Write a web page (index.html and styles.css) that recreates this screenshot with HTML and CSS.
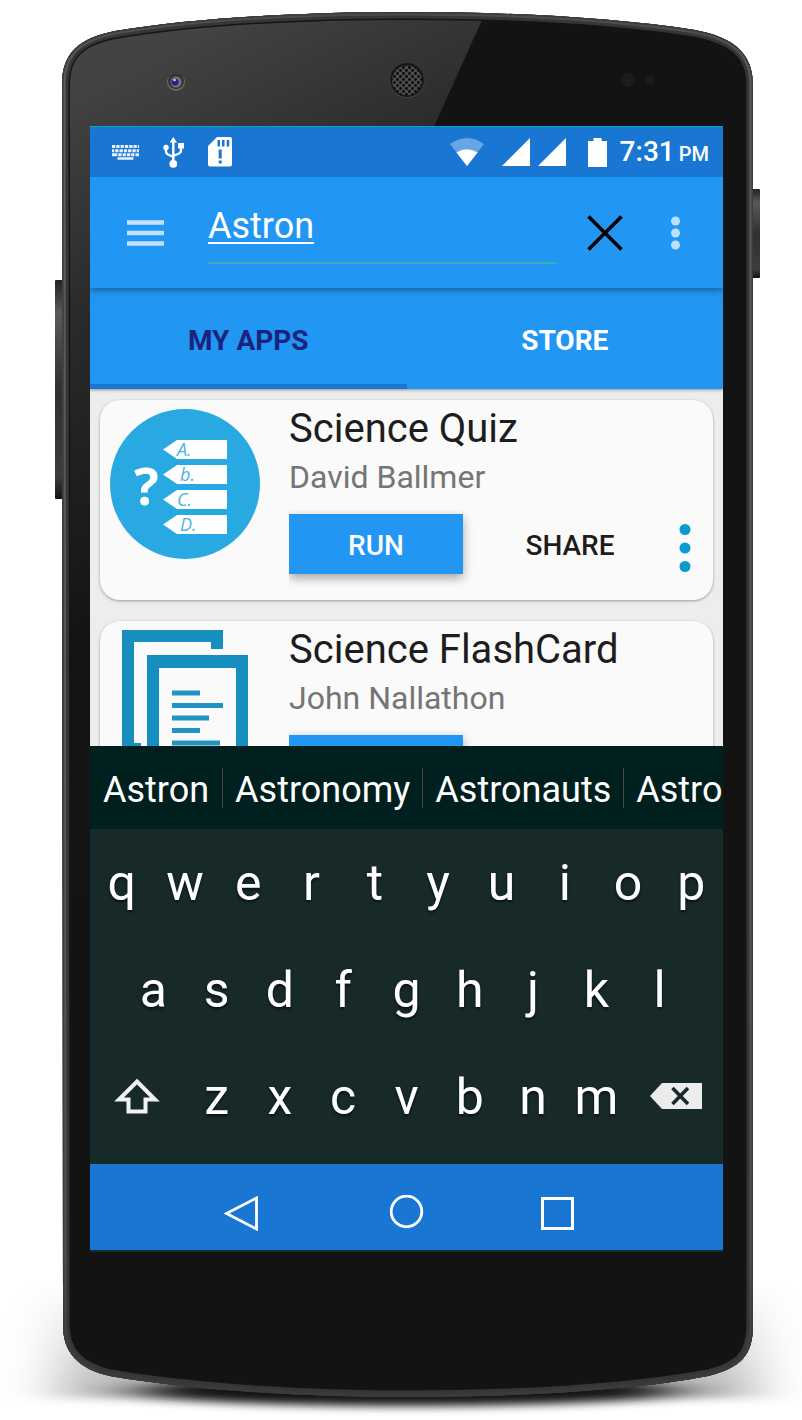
FILE: index.html
```html
<!DOCTYPE html>
<html lang="en">
<head>
<meta charset="utf-8">
<meta name="viewport" content="width=device-width, initial-scale=1">
<title>My Apps</title>
<link rel="stylesheet" href="styles.css">
</head>
<body>
<div class="phone">
  <svg class="phone-body" viewBox="0 0 802 1420" preserveAspectRatio="none" aria-hidden="true">
    <defs>
      <path id="shell" d="M62 85C62 52 80 38 115 31C200 17 310 12 407 12C505 12 610 17 695 30C732 37 753 52 753 85V1325C753 1356 740 1368 708 1376C630 1391 510 1397 407 1397C305 1397 190 1390 110 1376C78 1369 63 1352 63 1325Z"/>
      <clipPath id="shell-clip"><use href="#shell"/></clipPath>
      <linearGradient id="gloss" gradientUnits="userSpaceOnUse" x1="150" y1="50" x2="370" y2="490">
        <stop offset="0" stop-color="#434343"/><stop offset="0.4" stop-color="#2b2b2b"/><stop offset="1" stop-color="#141414"/>
      </linearGradient>
      <linearGradient id="key-side" x1="0" y1="0" x2="0" y2="1">
        <stop offset="0" stop-color="#222"/><stop offset="0.15" stop-color="#5a5a5a"/><stop offset="0.5" stop-color="#303030"/><stop offset="0.9" stop-color="#3c3c3c"/><stop offset="1" stop-color="#111"/>
      </linearGradient>
      <linearGradient id="rim" gradientUnits="userSpaceOnUse" x1="0" y1="0" x2="0" y2="1420">
        <stop offset="0" stop-color="#47484a"/><stop offset="0.06" stop-color="#5b5c5f"/><stop offset="0.88" stop-color="#505153"/><stop offset="0.96" stop-color="#3a3a3a"/>
      </linearGradient>
      <linearGradient id="halo" x1="0" y1="0" x2="0" y2="1">
        <stop offset="0" stop-color="#000" stop-opacity="0"/><stop offset="1" stop-color="#000" stop-opacity="0.3"/>
      </linearGradient>
      <filter id="blur-wide" x="-20%" y="-60%" width="140%" height="220%"><feGaussianBlur stdDeviation="28 5"/></filter>
      <filter id="blur-low" x="-20%" y="-100%" width="140%" height="300%"><feGaussianBlur stdDeviation="30 5"/></filter>
    
      <pattern id="mesh" width="6" height="6" patternUnits="userSpaceOnUse">
        <rect width="6" height="6" fill="#4c4c4c"/><circle cx="1.5" cy="1.5" r="1.4" fill="#080808"/><circle cx="4.5" cy="4.5" r="1.4" fill="#080808"/>
      </pattern>
    </defs>
    <rect x="60" y="1280" width="694" height="118" fill="url(#halo)" filter="url(#blur-wide)"/>
    <ellipse cx="407" cy="1391" rx="270" ry="15" fill="#000" opacity="0.9" filter="url(#blur-low)"/>
    <rect x="55" y="280" width="9" height="219" rx="1" fill="url(#key-side)"/>
    <rect x="751" y="189" width="9" height="89" rx="1" fill="url(#key-side)"/>
    <g clip-path="url(#shell-clip)">
      <use href="#shell" fill="#131313"/>
      <path d="M50 0H491L90 890H50Z" fill="url(#gloss)"/>
      <g fill="none">
        <use href="#shell" stroke="#151515" stroke-width="16"/>
        <use href="#shell" stroke="#353637" stroke-width="13"/>
        <use href="#shell" stroke="url(#rim)" stroke-width="7"/>
        <use href="#shell" stroke="#3b3c3d" stroke-width="3"/>
      </g>
    </g>
    <circle cx="176" cy="82" r="9" fill="#6a6868"/>
    <circle cx="176" cy="81" r="8" fill="#35332f"/>
    <circle cx="176" cy="82" r="5.500" fill="#77727f"/>
    <circle cx="175" cy="82" r="3.600" fill="#27218c"/>
    <circle cx="174.500" cy="80" r="1.300" fill="#cfd3ff"/>
    <circle cx="407" cy="80.500" r="17.500" fill="#444"/>
    <circle cx="407" cy="80" r="17" fill="#171717"/>
    <circle cx="407" cy="80.500" r="15" fill="url(#mesh)"/>
    <circle cx="628" cy="80" r="7" fill="#1c1b1a"/>
    <circle cx="629" cy="81" r="1.500" fill="#33201a"/>
    <circle cx="650" cy="80" r="4.500" fill="#1d1a19"/>
  </svg>

  <main class="screen">
    <div class="status">
      <svg class="st-keyboard" viewBox="0 0 27 15" width="27" height="15" fill="none" stroke="#e8f2fc" aria-hidden="true">
        <path stroke-width="3" d="M0 1.500H27" stroke-dasharray="3.300 1"/>
        <path stroke-width="3" d="M0 5.700H27" stroke-dasharray="2.200 1 3.300 1 3.300 1 3.300 1 3.300 1 3.300 1 4 1"/>
        <path stroke-width="3" d="M0 9.800H27" stroke-dasharray="5.300 1 3.300 1 3.300 1 3.300 1 3.300 1 5 1"/>
        <path stroke-width="2.500" d="M5.500 13.500H21.500"/>
      </svg>
      <svg class="st-usb" viewBox="0 0 21 31" width="21" height="31" fill="#fff" aria-hidden="true">
        <path d="M10.300 0L14 5.500H6.600Z"/><circle cx="10.300" cy="26.800" r="3.900"/><circle cx="3" cy="10.500" r="2.700"/><path d="M15 6H21V11.500H15Z"/>
        <path d="M10.300 4V26M3 11V14.500Q3 16.500 5 17.500L10.300 20M18 11V13.500Q18 15.500 16 16.500L10.300 19" fill="none" stroke="#fff" stroke-width="2.400"/>
      </svg>
      <svg class="st-sd" viewBox="0 0 24 30" width="24" height="30" aria-hidden="true">
        <path fill="#fff" fill-rule="evenodd" d="M9 0H22Q24 0 24 2V27.500Q24 29.500 22 29.500H2Q0 29.500 0 27.500V9ZM9.500 3V9.500H12V3ZM14 3V9.500H16.500V3ZM18.700 3V9.500H21.200V3ZM10.700 12.500V21.500H13.700V12.500ZM10.700 23.500V26.500H13.700V23.500Z"/>
      </svg>
      <svg class="st-wifi" viewBox="0 0 34 28" width="34" height="28" aria-hidden="true">
        <path fill="#69a5e3" d="M0 6Q17 -6 34 6L17 28Z"/><path fill="#fff" d="M6.500 14.500Q17 8 27.500 14.500L17 28Z"/>
      </svg>
      <svg class="st-signal" viewBox="0 0 64 28" width="64" height="28" fill="#fff" aria-hidden="true"><path d="M0 28L28 0V28ZM36 28L64 0V28Z"/></svg>
      <svg class="st-battery" viewBox="0 0 19 29" width="19" height="29" fill="#fff" aria-hidden="true"><path d="M5.500 0H13.500V3H19V29H0V3H5.500Z"/></svg>
      <span class="clock">7:31<small>PM</small></span>
    </div>

    <header class="toolbar">
      <button class="icon-btn nav-menu" type="button" aria-label="Open navigation">
        <svg viewBox="0 0 37 26" width="37" height="26" fill="none" stroke="#c3e1fb" stroke-width="4.500"><path d="M0 2.500H37M0 13H37M0 23.500H37"/></svg>
      </button>
      <input class="search" type="text" value="Astron" aria-label="Search apps" spellcheck="false">
      <button class="icon-btn clear" type="button" aria-label="Clear search">
        <svg viewBox="0 0 36 36" width="36" height="36" fill="none" stroke="#000" stroke-width="3.600"><path d="M1.500 1.500L34.500 34.500M34.500 1.500L1.500 34.500"/></svg>
      </button>
      <button class="icon-btn" type="button" aria-label="More options">
        <svg viewBox="0 0 9 34" width="9" height="34" fill="#bfe0fc"><circle cx="4.500" cy="5" r="4.500"/><circle cx="4.500" cy="17" r="4.500"/><circle cx="4.500" cy="29" r="4.500"/></svg>
      </button>
    </header>

    <div class="tabs" role="tablist">
      <button class="tab tab-active" type="button" role="tab" aria-selected="true">MY APPS</button>
      <button class="tab" type="button" role="tab" aria-selected="false">STORE</button>
    </div>

    <section class="apps" aria-label="My apps">
      <article class="card">
        <svg class="app-icon" viewBox="0 0 150 150" width="150" height="150" aria-hidden="true">
          <circle cx="75" cy="75" r="75" fill="#29a9e1"/>
          <path fill="#fff" d="M53 40.500L67 31H117V50H67ZM53 65.500L67 56H117V75H67ZM53 90.500L67 81H117V100H67ZM53 115.500L67 106H117V125H67Z"/>
          <g class="quiz-letters"><text x="67" y="47">A.</text><text x="70" y="72">b.</text><text x="67" y="97">C.</text><text x="70" y="122">D.</text></g>
          <text class="quiz-mark" x="24" y="96">?</text>
        </svg>
        <div class="info">
          <h2 class="title">Science Quiz</h2>
          <p class="author">David Ballmer</p>
          <div class="actions">
            <button class="run" type="button">RUN</button>
            <button class="share" type="button">SHARE</button>
            <button class="more" type="button" aria-label="More actions for Science Quiz">
              <svg viewBox="0 0 12 48" width="12" height="48" fill="#0c9bd0"><circle cx="6" cy="5.500" r="5.500"/><circle cx="6" cy="24" r="5.500"/><circle cx="6" cy="42.500" r="5.500"/></svg>
            </button>
          </div>
        </div>
      </article>
      <article class="card">
        <svg class="app-icon" viewBox="0 0 150 150" width="150" height="150" aria-hidden="true">
          <path fill="#168fbf" fill-rule="evenodd" d="M12 0H113V19H101V12H24V113H31V125H12ZM37 25H138V150H37ZM49 38V138H126V38Z"/>
          <path fill="none" stroke="#2294c2" stroke-width="5" d="M62 63H90M62 75.500H113M62 88H99M62 100.500H90M62 113H110"/>
        </svg>
        <div class="info">
          <h2 class="title">Science FlashCard</h2>
          <p class="author">John Nallathon</p>
          <div class="actions">
            <button class="run" type="button" aria-label="Run Science FlashCard"></button>
            <span class="share"></span>
            <span class="more"></span>
          </div>
        </div>
      </article>
    </section>

    <div class="suggestions">
      <button class="word" type="button">Astron</button>
      <button class="word" type="button">Astronomy</button>
      <button class="word" type="button">Astronauts</button>
      <button class="word" type="button">Astro</button>
    </div>

    <div class="keyboard">
      <div class="keys">
        <button class="key" type="button">q</button><button class="key" type="button">w</button><button class="key" type="button">e</button><button class="key" type="button">r</button><button class="key" type="button">t</button><button class="key" type="button">y</button><button class="key" type="button">u</button><button class="key" type="button">i</button><button class="key" type="button">o</button><button class="key" type="button">p</button>
      </div>
      <div class="keys keys-inset">
        <button class="key" type="button">a</button><button class="key" type="button">s</button><button class="key" type="button">d</button><button class="key" type="button">f</button><button class="key" type="button">g</button><button class="key" type="button">h</button><button class="key" type="button">j</button><button class="key" type="button">k</button><button class="key" type="button">l</button>
      </div>
      <div class="keys">
        <button class="key key-wide" type="button" aria-label="Shift">
          <svg viewBox="0 0 48 38" width="48" height="38" fill="none" stroke="#f2f2f2" stroke-width="4"><path d="M24 3.500L42 21.500H32.500V33.500H15.500V21.500H6Z"/></svg>
        </button><button class="key" type="button">z</button><button class="key" type="button">x</button><button class="key" type="button">c</button><button class="key" type="button">v</button><button class="key" type="button">b</button><button class="key" type="button">n</button><button class="key" type="button">m</button><button class="key key-wide" type="button" aria-label="Backspace">
          <svg viewBox="0 0 52 30" width="52" height="30"><path fill="#ececec" d="M0 14L12 1H52V27H12Z"/><path d="M22.500 6L38 22M38 6L22.500 22" stroke="#172a29" stroke-width="3.500"/></svg>
        </button>
      </div>
    </div>

    <nav class="navbar" aria-label="System">
      <button class="icon-btn" type="button" aria-label="Back">
        <svg viewBox="0 0 34 36" width="34" height="36" fill="none" stroke="#fff" stroke-width="2.800"><path d="M2.500 18.500L32.500 3V34Z"/></svg>
      </button>
      <button class="icon-btn home" type="button" aria-label="Home">
        <svg viewBox="0 0 34 36" width="34" height="36" fill="none" stroke="#fff" stroke-width="2.800"><circle cx="16.500" cy="16.500" r="15.300"/></svg>
      </button>
      <button class="icon-btn" type="button" aria-label="Recent apps">
        <svg viewBox="0 0 34 36" width="34" height="36" fill="none" stroke="#fff" stroke-width="3"><path d="M1.500 3.500H31.500V33.500H1.500Z"/></svg>
      </button>
    </nav>
  </main>
</div>
</body>
</html>
```
FILE: styles.css
```css
* {
  box-sizing: border-box;
}

body {
  margin: 0;
  background: #fff;
  font-family: Roboto, "Liberation Sans", sans-serif;
}

button,
input {
  margin: 0;
  padding: 0;
  border: 0;
  border-radius: 0;
  background: none;
  color: inherit;
  font: inherit;
}

svg {
  display: block;
  flex: none;
}

.phone {
  position: relative;
  display: flex;
  max-width: 802px;
  min-height: 100vh;
  margin: 0 auto;
  padding: 126px 79px 168px 90px;
}

.phone-body {
  position: absolute;
  inset: 0;
  width: 100%;
  height: 100%;
}

.screen {
  position: relative;
  display: flex;
  flex: 1;
  flex-direction: column;
  min-width: 0;
  border-top: 1px solid #12a5b5;
  border-bottom: 2px solid #1a2a2b;
  background: #ededed;
}

.status {
  display: flex;
  align-items: center;
  height: 50px;
  padding: 0 14px 0 22px;
  background: #1976d2;
  color: #fff;
}

.st-usb,
.st-sd {
  margin-left: 24px;
}

.st-wifi {
  margin-left: auto;
}

.st-signal {
  margin-left: 18px;
}

.st-battery {
  margin-left: 22px;
}

.clock {
  display: flex;
  align-items: baseline;
  gap: 4px;
  margin-left: 13px;
  font-size: 28px;
  font-weight: 500;
  line-height: 30px;
  padding-top: 2px;
}

.clock small {
  font-size: 20px;
}

.icon-btn {
  display: flex;
  align-items: center;
  justify-content: center;
}

.toolbar {
  position: relative;
  z-index: 1;
  display: flex;
  align-items: center;
  height: 111px;
  padding: 0 43px 0 37px;
  background: #2196f3;
  box-shadow: 0 2px 7px rgba(0, 0, 0, 0.4);
  clip-path: inset(0 0 -12px 0);
}

.nav-menu {
  margin-right: 44px;
}

.search {
  flex: 1;
  min-width: 0;
  height: 63px;
  margin-right: 30px;
  padding-bottom: 11px;
  border-bottom: 2px solid #41acb9;
  color: #fff;
  font-size: 36px;
  text-decoration: underline;
  text-decoration-thickness: 2px;
  text-underline-offset: 4px;
  outline: 0;
}

.clear {
  margin-right: 48px;
}

.tabs {
  position: relative;
  display: grid;
  grid-template-columns: 1fr 1fr;
  height: 101px;
  background: #2196f3;
  box-shadow: 0 1px 3px rgba(0, 0, 0, 0.4);
  clip-path: inset(0 0 -5px 0);
}

.tab {
  border-top: 8px solid transparent;
  border-bottom: 5px solid transparent;
  color: #fff;
  font-size: 28px;
  font-weight: 700;
}

.tab-active {
  border-bottom-color: #1976d2;
  color: #1a237e;
}

.apps {
  display: flex;
  flex: 1 1 0;
  flex-direction: column;
  gap: 21px;
  min-height: 357px;
  padding: 11px 10px;
  overflow: hidden;
}

.card {
  display: flex;
  flex: none;
  gap: 29px;
  padding-left: 10px;
  border-radius: 20px;
  background: #fafafa;
  box-shadow: 0 1px 3px rgba(0, 0, 0, 0.35);
}

.app-icon {
  margin-top: 9px;
}

.quiz-letters {
  fill: #4db5e3;
  font-family: "Open Sans", sans-serif;
  font-size: 18px;
  font-style: italic;
  font-weight: 400;
}

.quiz-mark {
  fill: #fff;
  font-family: "Open Sans", sans-serif;
  font-size: 52px;
  font-weight: 700;
}

.info {
  flex: 1;
  min-width: 0;
  padding-bottom: 26px;
}

.title {
  margin: 0;
  color: #1d1d1d;
  font-size: 40px;
  font-weight: 400;
  line-height: 58px;
}

.author {
  margin: 0 0 18px;
  color: #757575;
  font-size: 32px;
  line-height: 38px;
}

.actions {
  display: flex;
  height: 60px;
  font-size: 28px;
  font-weight: 500;
}

.run {
  flex: 1;
  margin-right: 20px;
  padding-top: 2px;
  background: #2196f3;
  box-shadow: 0 4px 10px rgba(0, 0, 0, 0.35);
  clip-path: inset(-4px -12px -16px 0);
  color: #fff;
}

.share {
  flex: 1;
  padding-top: 2px;
  color: #1d1d1d;
}

.more {
  display: flex;
  align-items: center;
  justify-content: center;
  width: 56px;
  padding-top: 8px;
}

.suggestions {
  position: relative;
  display: flex;
  align-items: center;
  height: 83px;
  overflow: hidden;
  background: #00201f;
  color: #fff;
  font-size: 36px;
}

.word {
  flex: none;
  height: 40px;
  padding: 0 12px;
  border-left: 1px solid #4d4744;
  line-height: 44px;
}

.word:first-child {
  padding-right: 13px;
  border-left-color: transparent;
}

.keyboard {
  padding-bottom: 14px;
  background: #172a29;
  color: #fff;
  font-size: 50px;
}

.keys {
  display: flex;
  height: 107px;
}

.keys-inset {
  padding: 0 5%;
}

.key {
  display: flex;
  flex: 2 1 0;
  align-items: center;
  justify-content: center;
  min-width: 0;
  text-shadow: 0 2px 3px rgba(0, 0, 0, 0.6);
}

.key-wide {
  flex-grow: 3;
}

.navbar {
  display: flex;
  align-items: center;
  justify-content: center;
  gap: 117px;
  height: 86px;
  padding: 12px 15px 0 0;
  background: #1976d2;
}

.home {
  margin-left: 15px;
}
```
